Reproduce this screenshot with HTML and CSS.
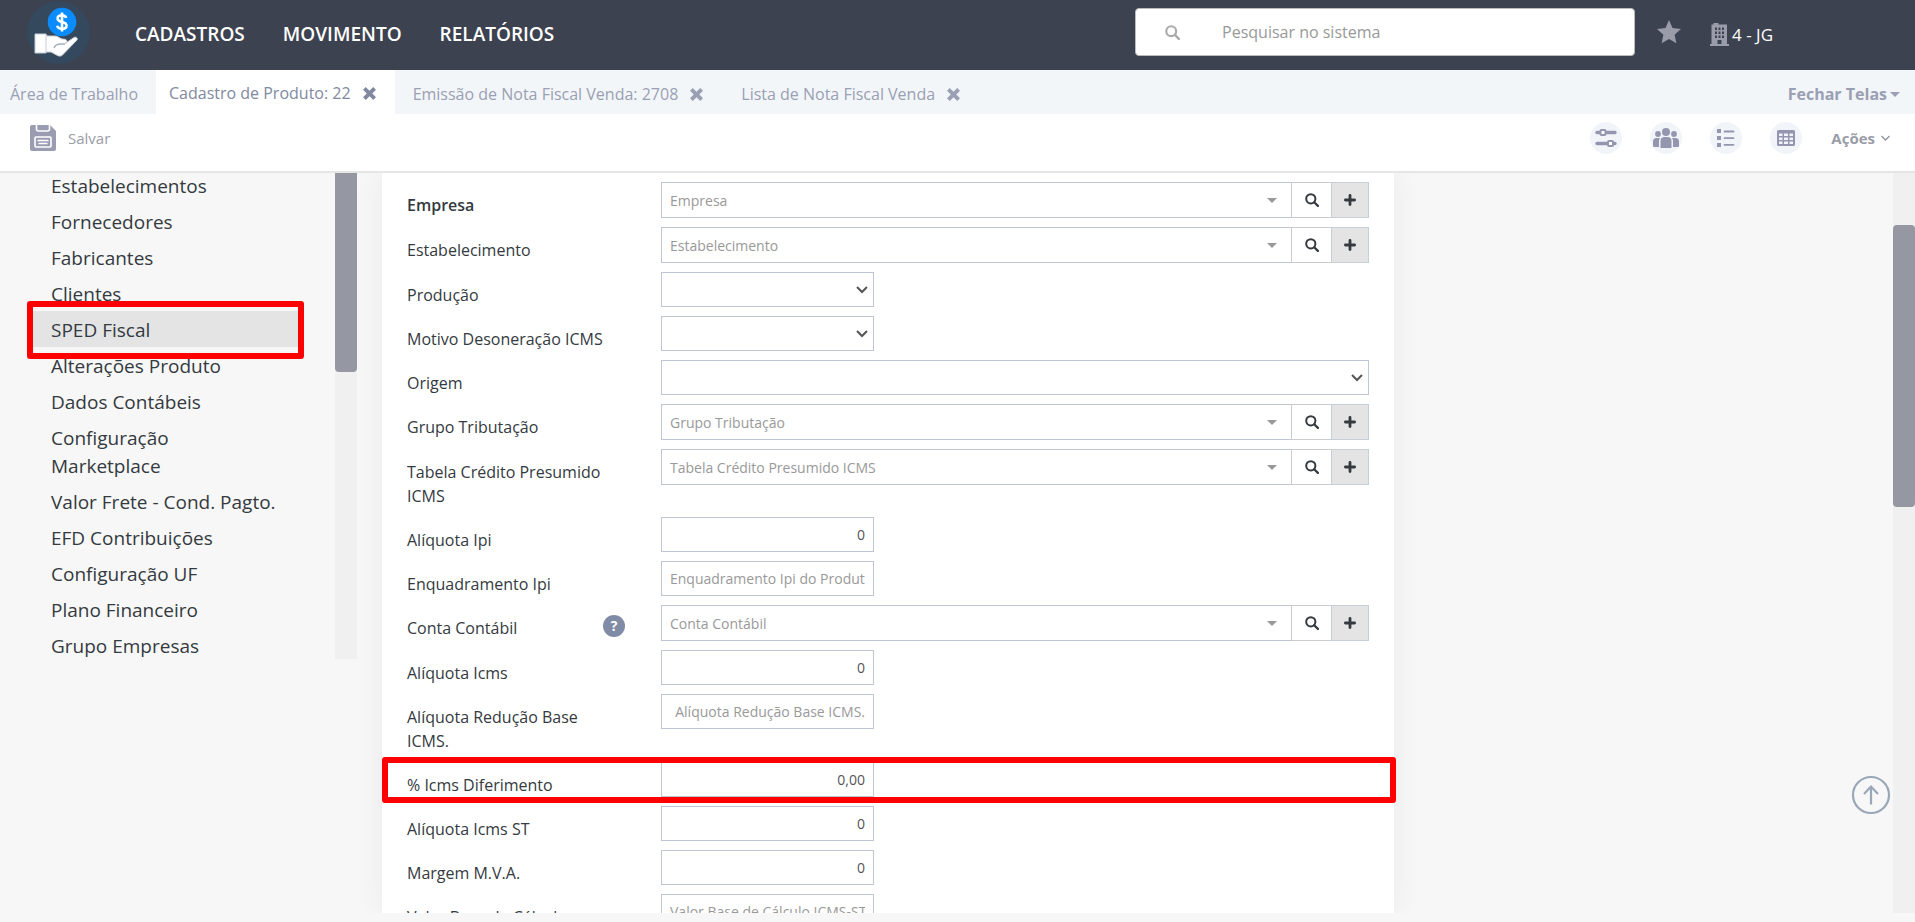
FILE: index.html
```html
<!doctype html>
<html lang="pt-BR">
  <head>
    <meta charset="UTF-8" />
    <meta name="viewport" content="width=device-width, initial-scale=1.0" />
    <title>Cadastro de Produto: 22</title>
    <link rel="stylesheet" href="styles.css">
  </head>
  <body>
    <svg class="sprite" aria-hidden="true">
      <symbol id="i-search" viewBox="0 0 14 14">
        <circle cx="5.8" cy="5.8" r="4.6" fill="none" stroke="currentColor" stroke-width="2" />
        <path d="M9.2 9.2l3.7 3.7" stroke="currentColor" stroke-width="2.2" stroke-linecap="round" />
      </symbol>
      <symbol id="i-plus" viewBox="0 0 12 12">
        <path d="M6 1.4v9.2M1.4 6h9.2" stroke="currentColor" stroke-width="2.8" stroke-linecap="round" />
      </symbol>
      <symbol id="i-times" viewBox="0 0 13 13">
        <path d="M2.8 2.8l7.4 7.4M10.2 2.8l-7.4 7.4" stroke="currentColor" stroke-width="3.9" stroke-linecap="square" stroke-linejoin="round" />
      </symbol>
    </svg>

    <header class="topbar">
      <a href="#" class="logo" aria-label="Início">
        <svg width="63" height="63" viewBox="0 0 63 63">
          <circle cx="31.5" cy="31.5" r="31.5" fill="#34495e" />
          <circle cx="35" cy="21" r="14.3" fill="#0a8cff" />
          <path d="M39.2 16.8c-.6-1.9-2.2-2.6-4.3-2.6-2.500 0-4.300 1.200-4.300 3.300 0 4.700 8.900 2.100 8.900 6.900 0 2.200-1.900 3.400-4.500 3.400-2.500 0-4.300-1-4.800-3M35 11.500v19" fill="none" stroke="#fff" stroke-width="2.600" />
          <path d="M8 33h11l1 2h8c3 0 4 2 7 3 3 0 5 .5 5 2.500 0 1-1 2-2 2l9-6c2-1 4 .5 3 2.500L35 54.500c-1.500.8-3 .8-4.500 0L24 51h-5v1H8z" fill="#fff" stroke="#c5ccd6" stroke-width="1" />
          <path d="M19 34v18" stroke="#c5ccd6" />
          <path d="M27 47c1-3 3-4 7-4h4" fill="none" stroke="#9fb0c2" stroke-width="1.500" />
        </svg>
      </a>
      <nav class="menu">
        <a href="#">CADASTROS</a>
        <a href="#">MOVIMENTO</a>
        <a href="#">RELATÓRIOS</a>
      </nav>
      <div class="search">
        <svg width="15" height="15"><use href="#i-search" /></svg>
        <input type="text" placeholder="Pesquisar no sistema" aria-label="Pesquisar no sistema" />
      </div>
      <button class="star" aria-label="Favoritos">
        <svg width="24" height="24" viewBox="0 0 24 24">
          <path d="M12 0l3.500 8 8.500.9-6.400 5.800 1.800 8.500L12 18.900l-7.400 4.300 1.800-8.500L0 8.900 8.500 8z" fill="#9a9da9" />
        </svg>
      </button>
      <a href="#" class="company">
        <svg width="19" height="23" viewBox="0 0 19 23">
          <path fill="#9a9da9" fill-rule="evenodd" d="M3.500 0h5v1.500H17V21h2v2H0v-2h1.500V1.500h2zM5 4.500v2.500h2V4.500zm3.500 0v2.500h2V4.500zm3.500 0v2.500h2V4.500zM5 8.500v2.500h2V8.500zm3.500 0v2.500h2V8.500zm3.500 0v2.500h2V8.500zM5 12.500V15h2v-2.500zm3.500 0V15h2v-2.500zm3.500 0V15h2v-2.500zM7.500 17v4h4v-4z" />
        </svg>
        <span>4 - JG</span>
      </a>
    </header>

    <nav class="tabs">
      <a href="#" class="tab home">Área de Trabalho</a>
      <div class="tab active">
        <a href="#">Cadastro de Produto: 22</a>
        <button aria-label="Fechar"><svg width="13" height="13"><use href="#i-times" /></svg></button>
      </div>
      <div class="tab">
        <a href="#">Emissão de Nota Fiscal Venda: 2708</a>
        <button aria-label="Fechar"><svg width="13" height="13"><use href="#i-times" /></svg></button>
      </div>
      <div class="tab">
        <a href="#">Lista de Nota Fiscal Venda</a>
        <button aria-label="Fechar"><svg width="13" height="13"><use href="#i-times" /></svg></button>
      </div>
      <button class="close-all">Fechar Telas<span class="caret"></span></button>
    </nav>

    <div class="toolbar">
      <button class="save">
        <svg width="26" height="26" viewBox="0 0 26 26">
          <path d="M2 0h18l6 6v18q0 2-2 2H2q-2 0-2-2V2q0-2 2-2z" fill="#9a9cb2" />
          <path d="M6.500 0v4q0 2 2 2h9q2 0 2-2V0" fill="none" stroke="#fff" stroke-width="1.600" />
          <rect x="5" y="12" width="16" height="10" rx="1" fill="#9a9cb2" stroke="#fff" stroke-width="1.600" />
          <path d="M7.500 15.500h11M8.500 18.500h9" stroke="#fff" stroke-width="1.300" />
        </svg>
        Salvar
      </button>
      <div class="tools">
        <button class="tool" aria-label="Filtros">
          <svg width="22" height="20" viewBox="0 0 22 20" fill="none" stroke="#9496b0" stroke-width="3.400" stroke-linecap="round">
            <path d="M2 4.500h18M2 15.500h18" />
            <rect x="5.500" y="2" width="5" height="5" rx="1" fill="#fff" stroke-width="2" />
            <rect x="13" y="13" width="5" height="5" rx="1" fill="#fff" stroke-width="2" />
          </svg>
        </button>
        <button class="tool" aria-label="Pessoas">
          <svg width="26" height="20" viewBox="0 0 26 20" fill="#9496b0">
            <circle cx="13" cy="4" r="4" /><circle cx="5" cy="6" r="2.900" /><circle cx="21" cy="6" r="2.900" />
            <path d="M7.500 20v-7q0-4 4-4h3q4 0 4 4v7zM0 18v-4.500Q0 10 3.500 10H7q-1 1.300-1 3v6H1.500Q0 19 0 18zM26 18v-4.500q0-3.500-3.500-3.500H19q1 1.300 1 3v6h4.500q1.500 0 1.500-1z" />
          </svg>
        </button>
        <button class="tool" aria-label="Lista">
          <svg width="18" height="18" viewBox="0 0 18 18">
            <path d="M0 0h4v4H0zM0 7h4v4H0zM0 14h4v4H0z" fill="#9496b0" />
            <path d="M7.500 2.500h9M7.500 9.200h9M7.500 15.800h9" stroke="#9496b0" stroke-width="1.800" stroke-linecap="round" />
          </svg>
        </button>
        <button class="tool" aria-label="Tabela">
          <svg width="18" height="16" viewBox="0 0 18 16">
            <rect width="18" height="16" rx="1.500" fill="#9496b0" />
            <path d="M2 3.500h3.500V6H2zM7 3.500h4V6H7zM12.500 3.500H16V6h-3.500zM2 7.500h3.500V10H2zM7 7.500h4V10H7zM12.500 7.500H16V10h-3.500zM2 11.500h3.500V14H2zM7 11.500h4V14H7zM12.500 11.500H16V14h-3.500z" fill="#f1f4f9" />
          </svg>
        </button>
      </div>
      <button class="actions">
        Ações
        <svg width="9" height="6" viewBox="0 0 9 6"><path d="M.5 1l4 4 4-4" fill="none" stroke="#8d93a0" stroke-width="1.300" /></svg>
      </button>
    </div>

    <main class="page">
      <aside class="sidebar">
        <ul class="side-list">
          <li><a href="#">Estabelecimentos</a></li>
          <li><a href="#">Fornecedores</a></li>
          <li><a href="#">Fabricantes</a></li>
          <li><a href="#">Clientes</a></li>
          <li class="current marked"><a href="#">SPED Fiscal</a></li>
          <li><a href="#">Alterações Produto</a></li>
          <li><a href="#">Dados Contábeis</a></li>
          <li><a href="#">Configuração<br />Marketplace</a></li>
          <li><a href="#">Valor Frete - Cond. Pagto.</a></li>
          <li><a href="#">EFD Contribuições</a></li>
          <li><a href="#">Configuração UF</a></li>
          <li><a href="#">Plano Financeiro</a></li>
          <li><a href="#">Grupo Empresas</a></li>
        </ul>
        <div class="scroll side-scroll"><div class="thumb"></div></div>
      </aside>

      <form class="card">
        <div class="row">
          <label for="empresa" class="required">Empresa</label>
          <div class="lookup">
            <div class="combo"><input type="text" id="empresa" placeholder="Empresa" /><span class="caret"></span></div>
            <button type="button" class="find" aria-label="Buscar"><svg width="14" height="14"><use href="#i-search" /></svg></button>
            <button type="button" class="add" aria-label="Adicionar"><svg width="12" height="12"><use href="#i-plus" /></svg></button>
          </div>
        </div>
        <div class="row">
          <label for="estabelecimento">Estabelecimento</label>
          <div class="lookup">
            <div class="combo"><input type="text" id="estabelecimento" placeholder="Estabelecimento" /><span class="caret"></span></div>
            <button type="button" class="find" aria-label="Buscar"><svg width="14" height="14"><use href="#i-search" /></svg></button>
            <button type="button" class="add" aria-label="Adicionar"><svg width="12" height="12"><use href="#i-plus" /></svg></button>
          </div>
        </div>
        <div class="row">
          <label for="producao">Produção</label>
          <select id="producao" class="field"><option></option></select>
        </div>
        <div class="row">
          <label for="motivo">Motivo Desoneração ICMS</label>
          <select id="motivo" class="field"><option></option></select>
        </div>
        <div class="row">
          <label for="origem">Origem</label>
          <select id="origem" class="field wide"><option></option></select>
        </div>
        <div class="row">
          <label for="grupo">Grupo Tributação</label>
          <div class="lookup">
            <div class="combo"><input type="text" id="grupo" placeholder="Grupo Tributação" /><span class="caret"></span></div>
            <button type="button" class="find" aria-label="Buscar"><svg width="14" height="14"><use href="#i-search" /></svg></button>
            <button type="button" class="add" aria-label="Adicionar"><svg width="12" height="12"><use href="#i-plus" /></svg></button>
          </div>
        </div>
        <div class="row">
          <label for="tabela">Tabela Crédito Presumido ICMS</label>
          <div class="lookup">
            <div class="combo"><input type="text" id="tabela" placeholder="Tabela Crédito Presumido ICMS" /><span class="caret"></span></div>
            <button type="button" class="find" aria-label="Buscar"><svg width="14" height="14"><use href="#i-search" /></svg></button>
            <button type="button" class="add" aria-label="Adicionar"><svg width="12" height="12"><use href="#i-plus" /></svg></button>
          </div>
        </div>
        <div class="row">
          <label for="ipi">Alíquota Ipi</label>
          <input type="text" id="ipi" class="field number" value="0" />
        </div>
        <div class="row">
          <label for="enquadramento">Enquadramento Ipi</label>
          <input type="text" id="enquadramento" class="field" placeholder="Enquadramento Ipi do Produto" />
        </div>
        <div class="row">
          <label for="conta">Conta Contábil</label>
          <button type="button" class="help" aria-label="Ajuda">?</button>
          <div class="lookup">
            <div class="combo"><input type="text" id="conta" placeholder="Conta Contábil" /><span class="caret"></span></div>
            <button type="button" class="find" aria-label="Buscar"><svg width="14" height="14"><use href="#i-search" /></svg></button>
            <button type="button" class="add" aria-label="Adicionar"><svg width="12" height="12"><use href="#i-plus" /></svg></button>
          </div>
        </div>
        <div class="row">
          <label for="icms">Alíquota Icms</label>
          <input type="text" id="icms" class="field number" value="0" />
        </div>
        <div class="row">
          <label for="reducao">Alíquota Redução Base ICMS.</label>
          <input type="text" id="reducao" class="field number" placeholder="Alíquota Redução Base ICMS." />
        </div>
        <div class="row marked">
          <label for="diferimento">% Icms Diferimento</label>
          <input type="text" id="diferimento" class="field number" value="0,00" />
        </div>
        <div class="row">
          <label for="icms-st">Alíquota Icms ST</label>
          <input type="text" id="icms-st" class="field number" value="0" />
        </div>
        <div class="row">
          <label for="mva">Margem M.V.A.</label>
          <input type="text" id="mva" class="field number" value="0" />
        </div>
        <div class="row">
          <label for="base-st">Valor Base de Cálculo</label>
          <input type="text" id="base-st" class="field" placeholder="Valor Base de Cálculo ICMS-ST" />
        </div>
      </form>

      <div class="scroll page-scroll"><div class="thumb"></div></div>
    </main>

    <a href="#" class="to-top" aria-label="Voltar ao topo">
      <svg width="40" height="40" viewBox="0 0 40 40" fill="none" stroke="#9aa7b8" stroke-width="2.200">
        <circle cx="20" cy="20" r="18" />
        <path d="M20 29.500V12M13 19l7-7.500 7 7.500" />
      </svg>
    </a>
  </body>
</html>
```
FILE: styles.css
```css
* {
  box-sizing: border-box;
}
body {
  margin: 0;
  height: 100vh;
  display: flex;
  flex-direction: column;
  overflow: hidden;
  background-color: #f7f7f7;
  color: #343a40;
  font-family: "Segoe UI", "Open Sans", sans-serif;
  font-size: 16px;
}
a {
  color: inherit;
  text-decoration: none;
}
button {
  padding: 0;
  border: none;
  background: none;
  color: inherit;
  font: inherit;
  cursor: pointer;
}
input,
select {
  font-family: inherit;
  font-size: 14px;
  color: #555;
}
input::placeholder {
  color: #999;
}
svg {
  display: block;
  flex: none;
}
.sprite {
  position: absolute;
  width: 0;
  height: 0;
}
.caret {
  flex: none;
  border: 5px solid transparent;
  border-top-color: currentColor;
  border-bottom: none;
}

/* top bar */
.topbar {
  flex: none;
  height: 70px;
  padding: 0 142px 6px 27px;
  display: flex;
  align-items: center;
  background-color: #3d4250;
  color: white;
}
.menu {
  display: flex;
  gap: 38px;
  margin: 4px auto 0 45px;
  font-size: 19px;
  font-weight: 600;
}
.search {
  width: 500px;
  height: 48px;
  padding: 0 29px;
  display: flex;
  align-items: center;
  gap: 42px;
  background-color: white;
  border: 1px solid #bbb;
  border-radius: 4px;
  color: #aaa;
}
.search input {
  flex: 1;
  min-width: 0;
  padding: 0;
  border: none;
  outline: none;
  font-size: 16px;
}
.star {
  margin: 0 29px 0 22px;
}
.company {
  display: flex;
  align-items: center;
  gap: 3px;
  margin-top: 4px;
  font-size: 17px;
}

/* open screens */
.tabs {
  flex: none;
  height: 44px;
  display: flex;
  background-color: #f2f6f9;
  color: #9a9fb3;
}
.tab {
  display: flex;
  align-items: center;
  gap: 12px;
  padding: 4px 20px 0 18px;
}
.tab.home {
  padding: 4px 18px 0 10px;
}
.tab.active {
  padding: 2px 19px 0 13px;
  background-color: white;
  color: #8189a0;
}
.close-all {
  display: flex;
  align-items: center;
  gap: 3px;
  margin-left: auto;
  padding: 4px 15px 0 0;
  font-weight: 700;
}

/* toolbar */
.toolbar {
  flex: none;
  height: 59px;
  padding: 0 25px 10px 30px;
  display: flex;
  align-items: center;
  background-color: white;
  border-bottom: 2px solid #e5e5e5;
  color: #9a9da8;
  font-size: 15px;
}
.save {
  display: flex;
  align-items: center;
  gap: 12px;
}
.tools {
  display: flex;
  gap: 28px;
  margin-left: auto;
}
.tool {
  width: 32px;
  height: 32px;
  display: flex;
  align-items: center;
  justify-content: center;
  border-radius: 50%;
  background-color: #f1f4f9;
}
.actions {
  display: flex;
  align-items: center;
  gap: 6px;
  margin-left: 29px;
  font-weight: 700;
}

/* content */
.page {
  flex: 1;
  min-height: 0;
  margin-bottom: 9px;
  display: grid;
  grid-template-columns: 382px 67fr 33fr 22px;
  grid-template-rows: 100%;
  overflow: hidden;
}
.scroll {
  width: 22px;
  background-color: #f0f0f0;
}
.thumb {
  background-color: #9598a3;
  border-radius: 4px;
}
.sidebar {
  height: calc(100vh - 436px);
  display: flex;
  overflow: hidden;
}
.side-list {
  width: 277px;
  margin: -6px 31px 0 27px;
  padding: 0;
  list-style: none;
  flex: none;
  font-size: 19px;
}
.side-list li {
  padding: 5px 24px 3px;
  line-height: 28px;
}
.side-list .current {
  background-color: #e4e4e4;
}
.side-scroll .thumb {
  height: 41%;
  border-radius: 0 0 4px 4px;
}
.page-scroll {
  grid-column: 4;
  padding-top: 52px;
}
.page-scroll .thumb {
  height: 41%;
}

/* red outline drawn over an item */
.marked {
  position: relative;
}
.marked::after {
  content: "";
  position: absolute;
  inset: -10px 0 -12px;
  border: 6px solid #f00;
  border-radius: 3px;
  pointer-events: none;
}

/* form */
.card {
  padding: 9px 0 0;
  background-color: white;
  box-shadow: 0 0 30px rgba(0, 0, 0, 0.06);
}
.row {
  display: flex;
  align-items: flex-start;
  margin-bottom: 9px;
  padding: 0 25px;
}
.row.marked::after {
  inset: -5px -2px -6px 0;
}
.row label {
  flex: none;
  width: 210px;
  margin-right: 44px;
  padding-top: 11px;
  line-height: 24px;
}
.row .required {
  font-weight: 600;
}
.field {
  width: 213px;
  height: 35px;
  padding: 0 8px;
  background-color: white;
  border: 1px solid #bfc6d3;
}
select.field {
  appearance: none;
  border-radius: 0;
  background: white url("data:image/svg+xml,%3Csvg xmlns='http://www.w3.org/2000/svg' width='12' height='8'%3E%3Cpath d='M1 1l5 5 5-5' fill='none' stroke='%23555' stroke-width='2'/%3E%3C/svg%3E") no-repeat right 5px center;
}
.field.wide {
  width: auto;
  flex: 1;
}
.number {
  text-align: right;
}
.lookup {
  flex: 1;
  height: 36px;
  display: flex;
}
.combo {
  flex: 1;
  display: flex;
  align-items: center;
  padding: 0 14px 0 8px;
  border: 1px solid #bfc6d3;
  border-right: none;
  color: #999;
}
.combo input {
  flex: 1;
  min-width: 0;
  padding: 0;
  border: none;
  outline: none;
}
.find,
.add {
  display: flex;
  align-items: center;
  justify-content: center;
  color: #343a40;
}
.find {
  width: 40px;
  border: 1px solid #ccc;
  border-right: none;
}
.add {
  width: 38px;
  background-color: #e4e4e4;
  border: 1px solid #c5cfda;
}
.help {
  flex: none;
  width: 22px;
  height: 22px;
  margin: 10px 36px 0 -58px;
  border-radius: 50%;
  background-color: #808ba5;
  color: white;
  font-size: 14px;
  font-weight: 700;
  line-height: 22px;
}
.to-top {
  position: absolute;
  right: 24px;
  bottom: 107px;
}
```
